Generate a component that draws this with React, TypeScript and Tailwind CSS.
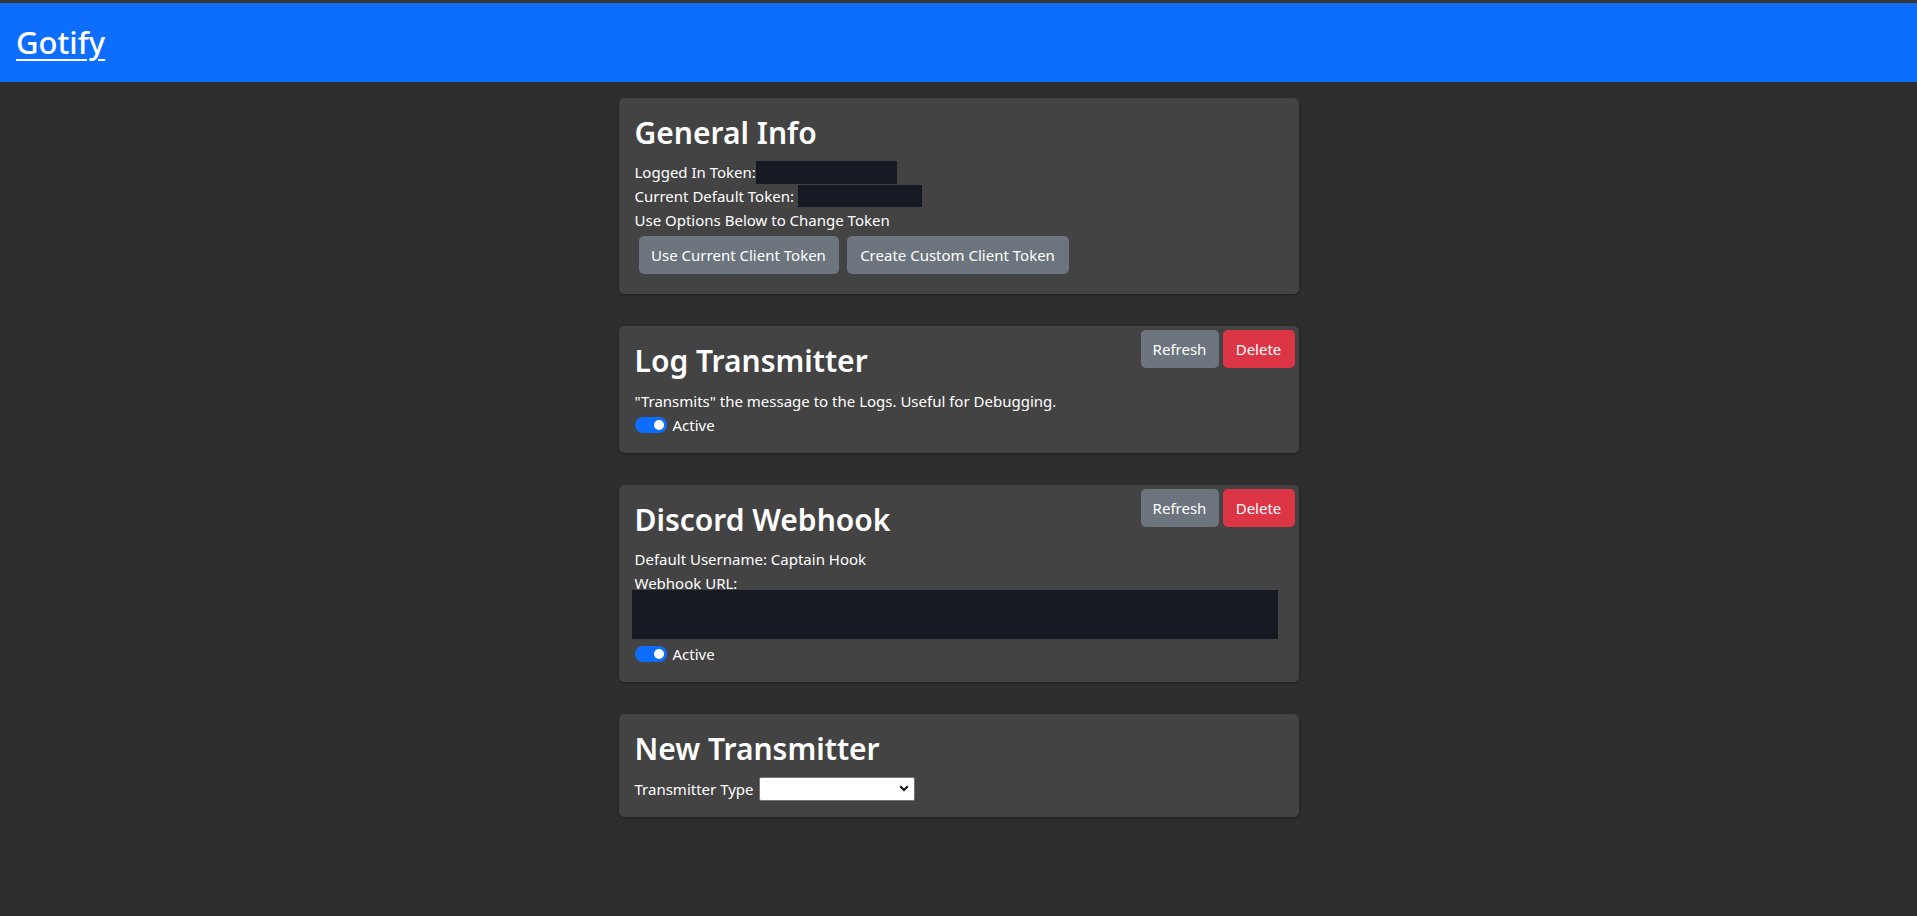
import { useState } from "react";

type CardProps = {
  title: string;
  actions?: boolean;
  children: React.ReactNode;
};

function Redacted({ className }: { className: string }) {
  return <span className={"inline-block bg-[#151a23] align-middle " + className} />;
}

function Toggle({ label }: { label: string }) {
  const [on, setOn] = useState(true);
  return (
    <label className="flex h-6 items-center gap-[6px] cursor-pointer" onClick={() => setOn(!on)}>
      <span
        className={
          "flex h-4 w-8 items-center rounded-full px-[3px] " +
          (on ? "justify-end bg-[#0d6efd]" : "justify-start bg-[#555]")
        }
      >
        <span className="h-[10px] w-[10px] rounded-full bg-white" />
      </span>
      <span>{label}</span>
    </label>
  );
}

function Card({ title, actions, children }: CardProps) {
  return (
    <div className="relative rounded-[5px] bg-[#434343] p-4 shadow-[0_1px_3px_rgba(0,0,0,0.35)]">
      {actions && (
        <div className="absolute right-1 top-1 flex gap-1">
          <button className="h-[38px] w-[78px] rounded-[5px] bg-[#6c757d] text-white">
            Refresh
          </button>
          <button className="h-[38px] w-[72px] rounded-[5px] bg-[#dc3545] text-white">
            Delete
          </button>
        </div>
      )}
      <h2 className="mb-2 text-[30px] font-semibold leading-[38.4px]">{title}</h2>
      {children}
    </div>
  );
}

export default function App() {
  return (
    <div className="min-h-screen bg-[#2e2e2e] font-['Noto_Sans',sans-serif] text-[15px] leading-6 text-white">
      <nav className="flex h-[82px] items-center border-t-[3px] border-[#353535] bg-[#0d6efd] px-4">
        <a href="#" className="text-[31px] font-medium leading-none underline underline-offset-[5px] decoration-2">
          Gotify
        </a>
      </nav>

      <main className="mx-auto flex w-[680px] flex-col gap-8 pb-10 pt-4">
        <Card title="General Info">
          <div className="flex h-6 items-center">
            Logged In Token:
            <Redacted className="h-[23px] w-[141px]" />
          </div>
          <div className="flex h-6 items-center">
            Current Default Token:&nbsp;
            <Redacted className="h-[22px] w-[124px]" />
          </div>
          <div>Use Options Below to Change Token</div>
          <div className="flex">
            <button className="m-1 h-[38px] w-[200px] rounded-[5px] bg-[#6c757d] text-white">
              Use Current Client Token
            </button>
            <button className="m-1 h-[38px] w-[222px] rounded-[5px] bg-[#6c757d] text-white">
              Create Custom Client Token
            </button>
          </div>
        </Card>

        <Card title="Log Transmitter" actions>
          <div>"Transmits" the message to the Logs. Useful for Debugging.</div>
          <Toggle label="Active" />
        </Card>

        <Card title="Discord Webhook" actions>
          <div>Default Username: Captain Hook</div>
          <div>Webhook URL:</div>
          <div className="-ml-[3px] -mt-[5px] mb-[3px] h-[49px] w-[646px] bg-[#151a23]" />
          <Toggle label="Active" />
        </Card>

        <Card title="New Transmitter">
          <div className="flex h-6 items-center gap-[5px]">
            <span>Transmitter Type</span>
            <div className="relative">
              <select className="block h-6 w-[156px] appearance-none rounded-[2px] border border-[#767676] bg-white px-1 text-[13px] text-black">
                <option value=""></option>
                <option value="log">Log Transmitter</option>
                <option value="discord">Discord Webhook</option>
              </select>
              <svg
                className="pointer-events-none absolute right-[6px] top-[8px]"
                width="10"
                height="7"
                viewBox="0 0 10 7"
              >
                <path d="M1.2 1.2 L5 5 L8.8 1.2" fill="none" stroke="#111" strokeWidth="2" />
              </svg>
            </div>
          </div>
        </Card>
      </main>
    </div>
  );
}
